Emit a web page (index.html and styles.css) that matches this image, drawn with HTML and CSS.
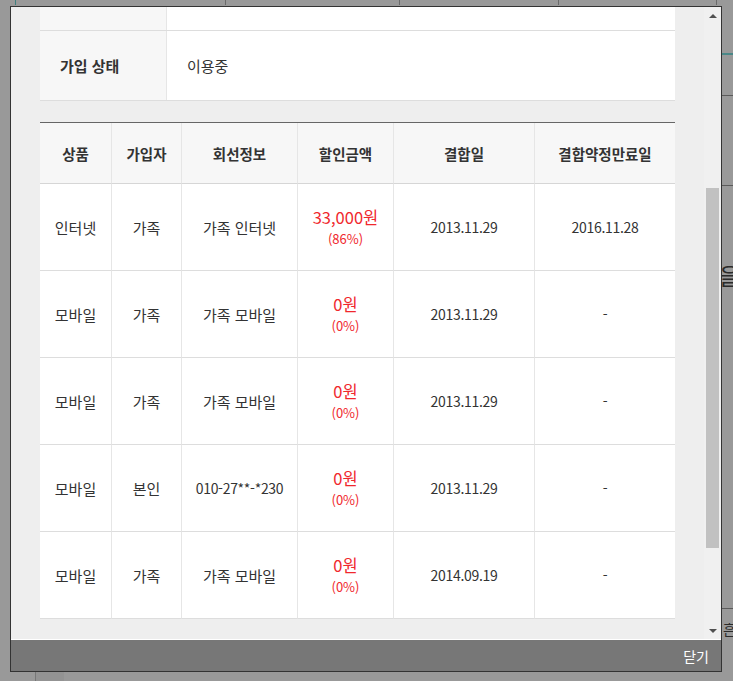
FILE: index.html
```html
<!DOCTYPE html>
<html lang="ko">
<head>
<meta charset="utf-8">
<title>결합 정보</title>
<link rel="stylesheet" href="styles.css">
</head>
<body>
<div class="backdrop" aria-hidden="true">
  <span class="tick tick-teal" style="left:15px"></span>
  <span class="tick" style="left:225px"></span>
  <span class="tick" style="left:399px"></span>
  <span class="tick" style="left:558px"></span>
  <span class="tick" style="left:716px"></span>
  <span class="hline hline-teal" style="top:53px"></span>
  <span class="hline" style="top:95px"></span>
  <span class="hline" style="top:185px"></span>
  <span class="hline" style="top:608px"></span>
  <span class="bg-char bg-char-lg">을</span>
  <span class="bg-char bg-char-sm">흔</span>
  <span class="bg-col"></span>
</div>

<div class="modal" role="dialog">
  <div class="modal-body">
    <div class="scroll-area">
      <div class="info">
        <div class="info-row">
          <div class="info-label"></div>
          <div class="info-value"></div>
        </div>
        <div class="info-row">
          <div class="info-label">가입 상태</div>
          <div class="info-value">이용중</div>
        </div>
      </div>

      <div class="grid">
        <div class="th">상품</div>
        <div class="th">가입자</div>
        <div class="th">회선정보</div>
        <div class="th">할인금액</div>
        <div class="th">결합일</div>
        <div class="th">결합약정만료일</div>

        <div class="td">인터넷</div>
        <div class="td">가족</div>
        <div class="td">가족 인터넷</div>
        <div class="td"><span class="amount">33,000원</span><span class="rate">(86%)</span></div>
        <div class="td num">2013.11.29</div>
        <div class="td num">2016.11.28</div>

        <div class="td">모바일</div>
        <div class="td">가족</div>
        <div class="td">가족 모바일</div>
        <div class="td"><span class="amount">0원</span><span class="rate">(0%)</span></div>
        <div class="td num">2013.11.29</div>
        <div class="td num">-</div>

        <div class="td">모바일</div>
        <div class="td">가족</div>
        <div class="td">가족 모바일</div>
        <div class="td"><span class="amount">0원</span><span class="rate">(0%)</span></div>
        <div class="td num">2013.11.29</div>
        <div class="td num">-</div>

        <div class="td">모바일</div>
        <div class="td">본인</div>
        <div class="td num">010-27**-*230</div>
        <div class="td"><span class="amount">0원</span><span class="rate">(0%)</span></div>
        <div class="td num">2013.11.29</div>
        <div class="td num">-</div>

        <div class="td">모바일</div>
        <div class="td">가족</div>
        <div class="td">가족 모바일</div>
        <div class="td"><span class="amount">0원</span><span class="rate">(0%)</span></div>
        <div class="td num">2014.09.19</div>
        <div class="td num">-</div>
      </div>
    </div>

    <div class="scrollbar" aria-hidden="true">
      <div class="sb-btn sb-up"></div>
      <div class="sb-track"><div class="sb-thumb"></div></div>
      <div class="sb-btn sb-down"></div>
    </div>
  </div>
  <div class="modal-footer">
    <button class="close-btn" type="button">닫기</button>
  </div>
</div>
</body>
</html>
```

FILE: styles.css
```css
* { box-sizing: border-box; }

html, body {
  margin: 0;
  padding: 0;
}

body {
  position: relative;
  width: 733px;
  height: 681px;
  overflow: hidden;
  background: #999999;
  font-family: "Noto Sans CJK KR", "Noto Sans", sans-serif;
  font-size: 15px;
  color: #333333;
}

/* page behind the dimmed overlay */
.backdrop {
  position: absolute;
  inset: 0;
}
.tick {
  position: absolute;
  top: 0;
  width: 1px;
  height: 5px;
  background: #6a6a6a;
}
.tick-teal { background: #3f7f7f; }
.hline {
  position: absolute;
  left: 722px;
  width: 11px;
  height: 1px;
  background: #5a5a5a;
}
.hline-teal {
  height: 2px;
  background: #4a8888;
}
.bg-char {
  position: absolute;
  color: #2a2a2a;
  line-height: 1;
}
.bg-char-lg {
  left: 719px;
  top: 264px;
  font-size: 23px;
}
.bg-char-sm {
  left: 723px;
  top: 622px;
  font-size: 14px;
}
.bg-col {
  position: absolute;
  left: 35px;
  top: 672px;
  width: 29px;
  height: 9px;
  border-left: 1px solid #777;
  background: #939393;
}

/* modal */
.modal {
  position: absolute;
  left: 10px;
  top: 6px;
  width: 712px;
  height: 666px;
  border: 1px solid #333333;
  background: #eeeeee;
  display: flex;
  flex-direction: column;
}

.modal-body {
  height: 632px;
  display: flex;
  overflow: hidden;
}

.scroll-area {
  flex: 1;
  min-width: 0;
  display: flex;
  flex-direction: column;
  justify-content: flex-end;
  padding: 0 29px 20px 29px;
  overflow: hidden;
}

.info {
  flex-shrink: 0;
  background: #ffffff;
  margin-bottom: 21px;
}
.info-row {
  display: grid;
  grid-template-columns: 127px 1fr;
  height: 70px;
  border-bottom: 1px solid #dddddd;
}
.info-label {
  display: flex;
  align-items: center;
  padding-left: 20px;
  background: #f7f7f7;
  border-right: 1px solid #e6e6e6;
  font-weight: bold;
}
.info-value {
  display: flex;
  align-items: center;
  padding-left: 20px;
}

.grid {
  flex-shrink: 0;
  display: grid;
  grid-template-columns: 72px 70px 116px 96px 141px 140px;
  border-top: 1px solid #666666;
  background: #ffffff;
}
.th,
.td {
  display: flex;
  flex-direction: column;
  align-items: center;
  justify-content: center;
  border-right: 1px solid #e6e6e6;
  text-align: center;
}
.th:nth-child(6n),
.td:nth-child(6n) {
  border-right: 0;
}
.th {
  height: 61px;
  background: #f7f7f7;
  border-bottom: 1px solid #d6d6d6;
  font-size: 14.5px;
  font-weight: bold;
}
.td {
  height: 87px;
  border-bottom: 1px solid #dddddd;
}
.td.num {
  font-size: 14px;
  letter-spacing: -0.3px;
}
.amount {
  color: #f0282d;
  font-size: 16.5px;
  line-height: 24px;
}
.rate {
  color: #f0282d;
  font-size: 13px;
  line-height: 20px;
}

/* scrollbar */
.scrollbar {
  width: 17px;
  display: flex;
  flex-direction: column;
  background: #f0f0f0;
}
.sb-btn {
  height: 17px;
  display: flex;
  align-items: center;
  justify-content: center;
}
.sb-up::before,
.sb-down::before {
  content: "";
  border-left: 4px solid transparent;
  border-right: 4px solid transparent;
}
.sb-up::before { border-bottom: 4px solid #505050; }
.sb-down::before { border-top: 4px solid #505050; }
.sb-track {
  flex: 1;
}
.sb-thumb {
  margin: 164px 2px 0;
  height: 360px;
  background: #c1c1c1;
}

/* footer */
.modal-footer {
  height: 32px;
  border-top: 1px solid #ffffff;
  background: #777777;
  display: flex;
  align-items: center;
  justify-content: flex-end;
  padding-right: 12px;
}
.close-btn {
  padding: 0;
  border: 0;
  background: none;
  color: #ffffff;
  font-family: inherit;
  font-size: 14px;
  line-height: 20px;
  cursor: pointer;
}
```
